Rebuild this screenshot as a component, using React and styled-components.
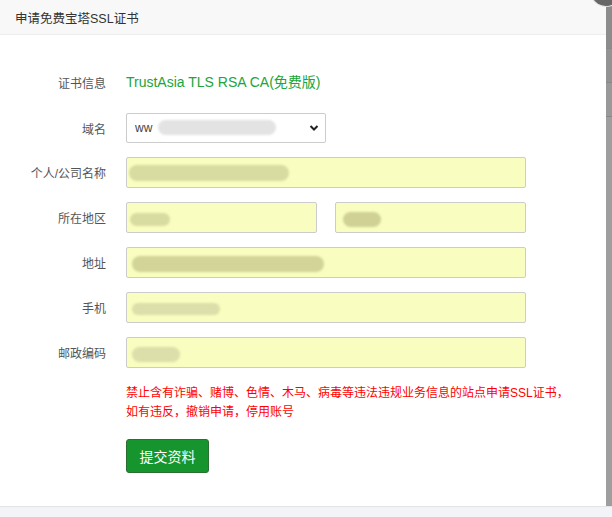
import React from 'react'
import styled, { createGlobalStyle } from 'styled-components'

const GlobalStyle = createGlobalStyle`
  html, body {
    margin: 0;
    padding: 0;
    background: #f3f4f7;
  }
  body {
    font-family: "Liberation Sans", "Noto Sans CJK SC", sans-serif;
  }
`

const Page = styled.div`
  width: 612px;
  height: 517px;
  display: flex;
  flex-direction: column;
  overflow: hidden;
  position: relative;
`

const Layer = styled.div`
  height: 507px;
  display: flex;
  background: #fff;
  border-bottom: 1px solid #e3e4e8;
  box-sizing: border-box;
`

const Dialog = styled.div`
  flex: 1;
  display: flex;
  flex-direction: column;
`

const Header = styled.div`
  height: 34px;
  background: #f8f8f8;
  border-bottom: 1px solid #eee;
  padding-left: 15px;
  display: flex;
  align-items: center;
  font-size: 12.5px;
  color: #333;
`

const CloseDot = styled.div`
  position: absolute;
  z-index: 2;
  top: -24px;
  left: 591px;
  width: 30px;
  height: 30px;
  border-radius: 50%;
  background: #676767;
  box-shadow: 0 0 0 1px #e0e0e0;
`

const Track = styled.div`
  width: 6px;
  background: #9e9e9e;
  display: flex;
  flex-direction: column;
`

const TrackPiece = styled.div`
  height: ${({ h }) => h}px;
  background: ${({ bg }) => bg};
  border-bottom: 1px solid #888;
`

const Form = styled.div`
  padding-top: 37px;
  display: flex;
  flex-direction: column;
  gap: 14px;
`

const Row = styled.div`
  display: grid;
  grid-template-columns: 106px 400px;
  column-gap: 20px;
  align-items: center;
  margin-bottom: ${({ mb }) => mb || 0}px;
`

const Label = styled.div`
  text-align: right;
  font-size: 12px;
  color: #555;
`

const CertName = styled.div`
  font-size: 14px;
  color: #20a53a;
  line-height: 20px;
`

const Field = styled.div`
  position: relative;
  width: ${({ w }) => w}px;
  height: ${({ h }) => h || 31}px;
  box-sizing: border-box;
  border: 1px solid #ccc;
  border-radius: 2px;
  background: ${({ plain }) => (plain ? '#fff' : '#f9fdc0')};
  display: flex;
  align-items: center;
  padding-left: 8px;
  font-size: 12px;
  color: #444;
  overflow: hidden;
`

const Pair = styled.div`
  display: flex;
  gap: 18px;
`

const Smudge = styled.span`
  position: absolute;
  top: ${({ t }) => t}px;
  left: ${({ l }) => l}px;
  width: ${({ w }) => w}px;
  height: ${({ h }) => h || 14}px;
  border-radius: 8px;
  background: ${({ c }) => c || 'rgba(205, 208, 150, 0.75)'};
  filter: blur(1px);
`

const Chevron = styled.svg`
  position: absolute;
  right: 6px;
  top: 10px;
`

const Note = styled.div`
  grid-column: 2;
  font-size: 12px;
  line-height: 19px;
  color: #ff0000;
  white-space: nowrap;
  margin-top: 2px;
`

const Submit = styled.button`
  grid-column: 2;
  justify-self: start;
  margin-top: 3px;
  width: 83px;
  height: 34px;
  background: #16952f;
  border: 1px solid #2b6e31;
  border-radius: 3px;
  color: #fff;
  font-size: 14px;
  font-family: "Liberation Sans", "Noto Sans CJK SC", sans-serif;
  cursor: pointer;
`

const Band = styled.div`
  flex: 1;
  background: #f3f4f7;
`

function App() {
  return (
    <Page>
      <GlobalStyle />
      <Layer>
        <Dialog>
          <Header>申请免费宝塔SSL证书</Header>
          <Form>
            <Row mb={7}>
              <Label>证书信息</Label>
              <CertName>TrustAsia TLS RSA CA(免费版)</CertName>
            </Row>
            <Row>
              <Label>域名</Label>
              <Field w={200} h={30} plain>
                ww
                <Smudge t={6} l={31} w={118} h={15} c="rgba(226, 226, 226, 0.95)" />
                <Chevron width="10" height="8" viewBox="0 0 10 8">
                  <path d="M1.5 2 L5 5.5 L8.5 2" fill="none" stroke="#222" strokeWidth="2" />
                </Chevron>
              </Field>
            </Row>
            <Row>
              <Label>个人/公司名称</Label>
              <Field w={400}>
                <Smudge t={7} l={2} w={160} h={16} />
              </Field>
            </Row>
            <Row>
              <Label>所在地区</Label>
              <Pair>
                <Field w={191}>
                  <Smudge t={10} l={3} w={40} h={13} />
                </Field>
                <Field w={191}>
                  <Smudge t={9} l={7} w={38} h={15} c="rgba(200, 202, 140, 0.85)" />
                </Field>
              </Pair>
            </Row>
            <Row>
              <Label>地址</Label>
              <Field w={400}>
                <Smudge t={8} l={5} w={192} h={16} c="rgba(200, 202, 140, 0.8)" />
              </Field>
            </Row>
            <Row>
              <Label>手机</Label>
              <Field w={400}>
                <Smudge t={10} l={5} w={88} h={12} c="rgba(215, 217, 165, 0.85)" />
              </Field>
            </Row>
            <Row>
              <Label>邮政编码</Label>
              <Field w={400}>
                <Smudge t={9} l={5} w={48} h={15} c="rgba(215, 217, 165, 0.85)" />
              </Field>
            </Row>
            <Row>
              <Note>
                禁止含有诈骗、赌博、色情、木马、病毒等违法违规业务信息的站点申请SSL证书，
                <br />
                如有违反，撤销申请，停用账号
              </Note>
            </Row>
            <Row>
              <Submit>提交资料</Submit>
            </Row>
          </Form>
        </Dialog>
        <Track>
          <TrackPiece h={48} bg="#8c8c8c" />
          <TrackPiece h={33} bg="#939393" />
          <TrackPiece h={33} bg="#999" />
        </Track>
      </Layer>
      <Band />
      <CloseDot />
    </Page>
  )
}

export default App
